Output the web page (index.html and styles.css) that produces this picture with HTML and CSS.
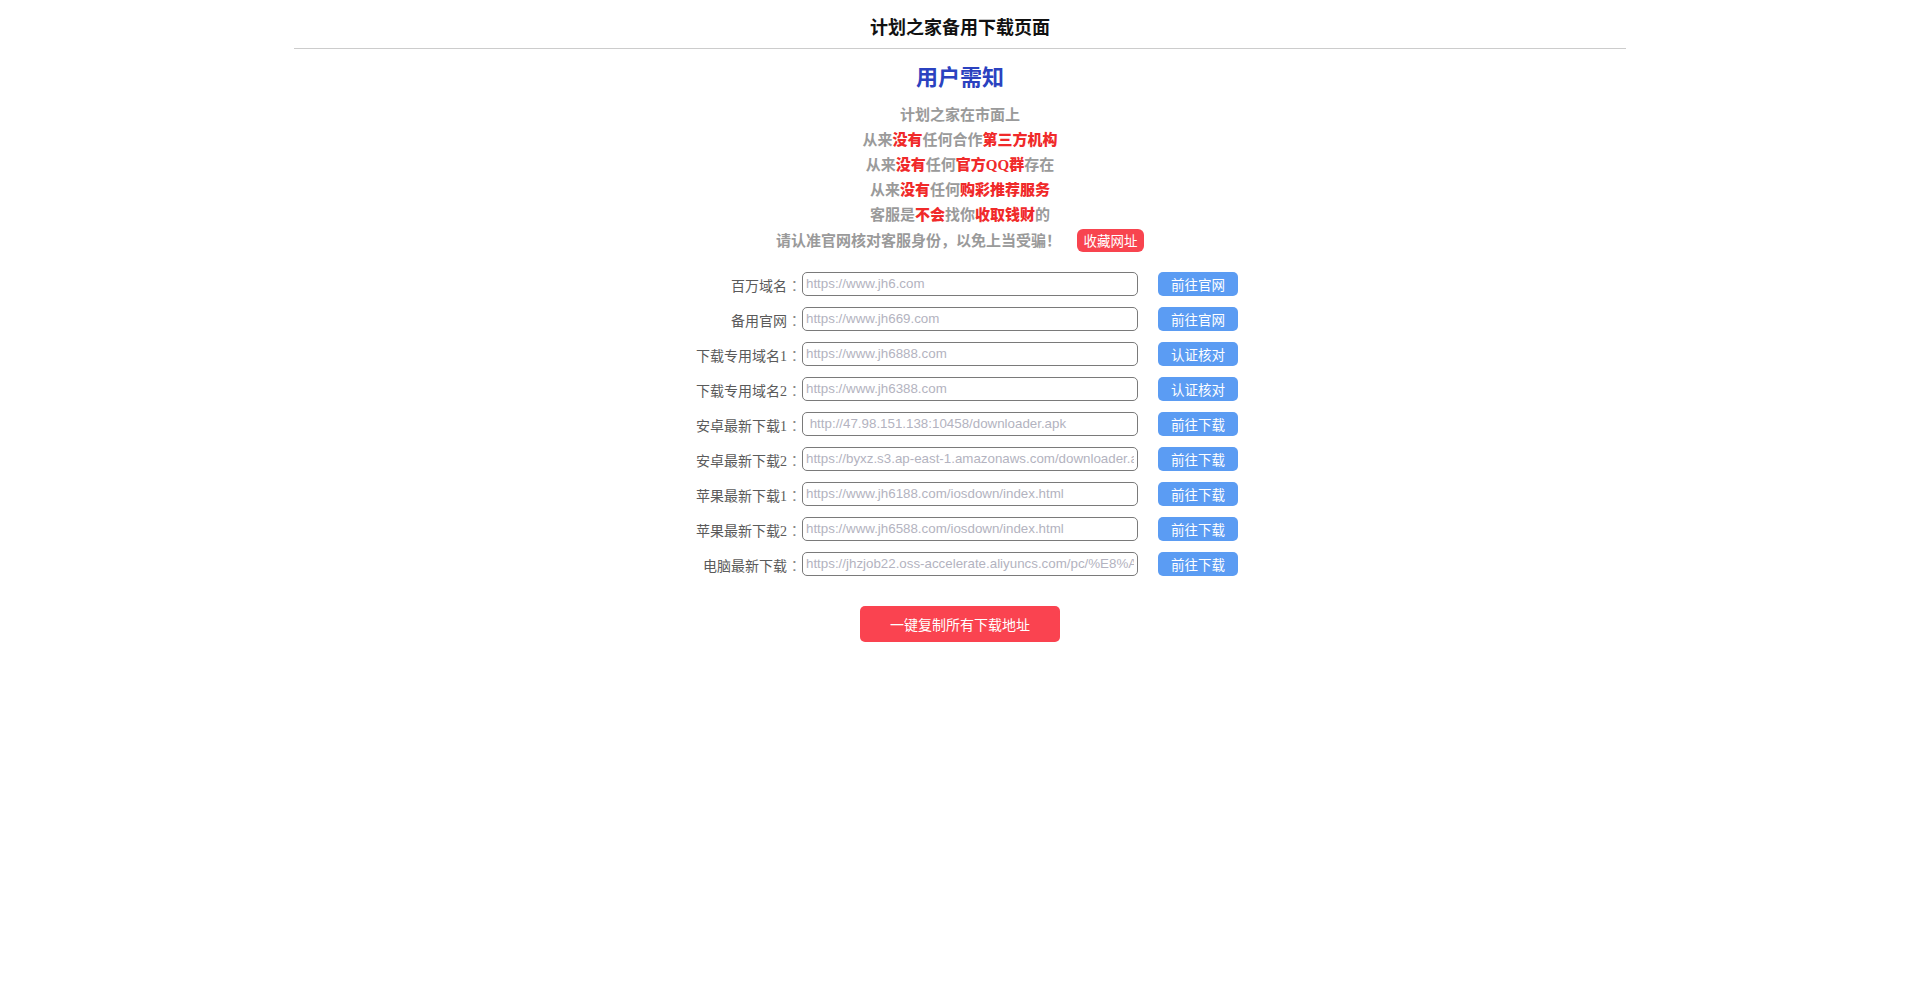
FILE: index.html
```html
<!DOCTYPE html>
<html lang="zh-CN">
<head>
<meta charset="utf-8">
<title>计划之家备用下载页面</title>
<link rel="stylesheet" href="styles.css">
</head>
<body>
<div class="page">
  <div class="header">计划之家备用下载页面</div>
  <h2 class="notice-title">用户需知</h2>
  <div class="notice">
    <p>计划之家在市面上</p>
    <p>从来<b class="red">没有</b>任何合作<b class="red">第三方机构</b></p>
    <p>从来<b class="red">没有</b>任何<b class="red">官方QQ群</b>存在</p>
    <p>从来<b class="red">没有</b>任何<b class="red">购彩推荐服务</b></p>
    <p>客服是<b class="red">不会</b>找你<b class="red">收取钱财</b>的</p>
    <p class="last"><span>请认准官网核对客服身份<span class="cjk">，</span>以免上当受骗<span class="cjk bang">！</span></span><button class="fav-btn">收藏网址</button></p>
  </div>
  <div class="form">
    <div class="row"><label class="lbl">百万域名<span class="colon">:</span></label><input class="url" placeholder="https://www.jh6.com"><button class="go-btn">前往官网</button></div>
    <div class="row"><label class="lbl">备用官网<span class="colon">:</span></label><input class="url" placeholder="https://www.jh669.com"><button class="go-btn">前往官网</button></div>
    <div class="row"><label class="lbl">下载专用域名1<span class="colon">:</span></label><input class="url" placeholder="https://www.jh6888.com"><button class="go-btn">认证核对</button></div>
    <div class="row"><label class="lbl">下载专用域名2<span class="colon">:</span></label><input class="url" placeholder="https://www.jh6388.com"><button class="go-btn">认证核对</button></div>
    <div class="row"><label class="lbl">安卓最新下载1<span class="colon">:</span></label><input class="url" placeholder=" http://47.98.151.138:10458/downloader.apk"><button class="go-btn">前往下载</button></div>
    <div class="row"><label class="lbl">安卓最新下载2<span class="colon">:</span></label><input class="url" placeholder="https://byxz.s3.ap-east-1.amazonaws.com/downloader.apk"><button class="go-btn">前往下载</button></div>
    <div class="row"><label class="lbl">苹果最新下载1<span class="colon">:</span></label><input class="url" placeholder="https://www.jh6188.com/iosdown/index.html"><button class="go-btn">前往下载</button></div>
    <div class="row"><label class="lbl">苹果最新下载2<span class="colon">:</span></label><input class="url" placeholder="https://www.jh6588.com/iosdown/index.html"><button class="go-btn">前往下载</button></div>
    <div class="row"><label class="lbl">电脑最新下载<span class="colon">:</span></label><input class="url" placeholder="https://jhzjob22.oss-accelerate.aliyuncs.com/pc/%E8%A1%8C"><button class="go-btn">前往下载</button></div>
  </div>
  <div class="copy-wrap"><button class="copy-btn">一键复制所有下载地址</button></div>
</div>
</body>
</html>
```
FILE: styles.css
```css
html, body {
  margin: 0;
  padding: 0;
  background: #fff;
}
body {
  font-family: "Liberation Serif", "Noto Sans CJK SC", serif;
}
.page {
  width: 1332px;
  margin: 0 auto;
}
.header {
  height: 43px;
  padding-top: 5px;
  line-height: 42px;
  border-bottom: 1px solid #cccccc;
  text-align: center;
  font-family: "Noto Sans CJK SC", sans-serif;
  font-size: 18px;
  font-weight: bold;
  color: #111;
}
.notice-title {
  margin: 11px 0 0;
  line-height: 30px;
  height: 30px;
  text-align: center;
  font-family: "Noto Sans CJK SC", sans-serif;
  font-size: 22px;
  font-weight: bold;
  color: #2b42c0;
}
.notice {
  margin-top: 13px;
  text-align: center;
  font-size: 15px;
  font-weight: bold;
  color: #9a9a9a;
}
.notice p {
  margin: 0;
  height: 25px;
  line-height: 25px;
}
.notice p.last {
  display: flex;
  justify-content: center;
  align-items: center;
}
.cjk {
  font-family: "Noto Sans CJK SC", sans-serif;
}
.bang {
  display: inline-block;
  width: 15px;
  text-align: center;
}
.red {
  color: #f02a2a;
}
.fav-btn {
  margin-left: 16px;
  height: 23px;
  width: 67px;
  padding: 0;
  border: none;
  border-radius: 6px;
  background: #f8444f;
  color: #fff;
  font-family: "Noto Sans CJK SC", sans-serif;
  font-size: 13.5px;
  font-weight: normal;
  line-height: 23px;
}
.form {
  margin-top: 13px;
}
.row {
  display: grid;
  grid-template-columns: 508px 336px auto;
  align-items: center;
  height: 35px;
}
.lbl {
  display: flex;
  justify-content: flex-end;
  align-items: center;
  font-size: 14px;
  color: #5a5a5a;
  padding-top: 2px;
  white-space: nowrap;
}
.colon {
  display: inline-block;
  width: 15px;
  text-align: center;
  font-family: "Liberation Sans", sans-serif;
  font-size: 19px;
  line-height: 20px;
  color: #888;
}
.url {
  box-sizing: border-box;
  width: 336px;
  height: 24px;
  padding: 1px 3px;
  border: 1px solid #7a7a7a;
  border-radius: 5px;
  font-family: "Liberation Sans", Arial, sans-serif;
  font-size: 13.33px;
  color: #333;
  background: #fff;
  outline: none;
}
.url::placeholder {
  color: #b3b3c0;
  opacity: 1;
}
.go-btn {
  justify-self: start;
  margin-left: 20px;
  width: 80px;
  height: 24px;
  padding: 0;
  border: none;
  border-radius: 5px;
  background: #5b9cf3;
  color: #fff;
  font-family: "Noto Sans CJK SC", sans-serif;
  font-size: 13.5px;
  line-height: 24px;
}
.copy-wrap {
  margin-top: 25px;
  text-align: center;
}
.copy-btn {
  width: 200px;
  height: 36px;
  padding: 0;
  border: none;
  border-radius: 5px;
  background: #fa4350;
  color: #fff;
  font-family: "Noto Sans CJK SC", sans-serif;
  font-size: 14px;
  line-height: 36px;
}
```
